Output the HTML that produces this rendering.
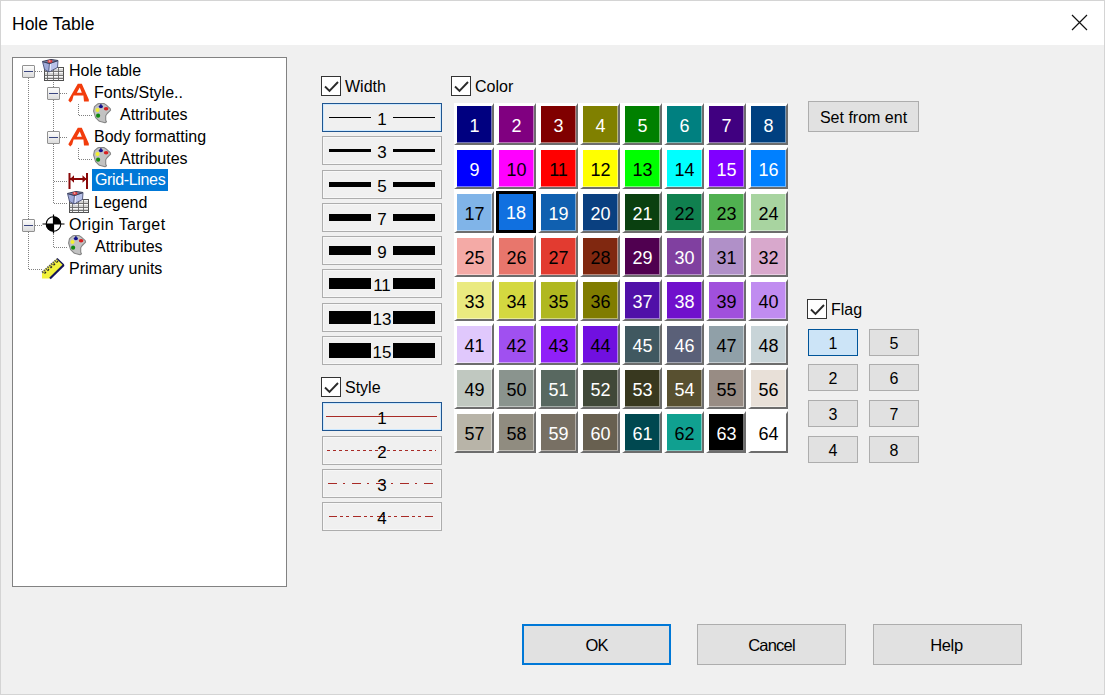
<!DOCTYPE html>
<html><head><meta charset="utf-8">
<style>
*{box-sizing:border-box}
html,body{margin:0;padding:0}
body{width:1105px;height:695px;position:relative;overflow:hidden;background:#f0f0f0;font-family:"Liberation Sans",sans-serif;color:#000}
.abs{position:absolute}
#frame{position:absolute;left:0;top:0;width:1105px;height:695px;border:1px solid #d4d4d4;pointer-events:none}
#title{position:absolute;left:1px;top:1px;width:1103px;height:44px;background:#fff}
#title span{position:absolute;left:11px;top:13px;font-size:17.5px;line-height:20px;white-space:nowrap}
#close{position:absolute;left:1070px;top:13px}
#tree{position:absolute;left:12px;top:57px;width:275px;height:530px;background:#fff;border:1px solid #828282}
.t{position:absolute;font-size:16px;line-height:20px;white-space:nowrap}
.selt{background:#0078d7;color:#fff;padding:0 3px}
.exp{position:absolute;width:13px;height:13px;border:1px solid #919191;border-radius:1px;background:linear-gradient(#fcfcfc,#dcdcdc)}
.exp:after{content:"";position:absolute;left:1px;top:5px;width:9px;height:1px;background:#3a4680}
.dv{position:absolute;width:1px;background-image:linear-gradient(#808080 50%,transparent 50%);background-size:1px 2px}
.dh{position:absolute;height:1px;background-image:linear-gradient(90deg,#808080 50%,transparent 50%);background-size:2px 1px}
.cb{position:absolute;width:20px;height:20px;border:1px solid #333;background:#fff}
.cb svg{position:absolute;left:0;top:0}
.lbl{position:absolute;font-size:16px;line-height:20px;white-space:nowrap}
#grid{position:absolute;left:454px;top:103px;width:334px;height:350px;background:#fff}
.cell{position:absolute;width:40px;height:42px;border-style:solid;border-width:3px 2px 2px 3px;border-color:#fff #6d6d6d #6d6d6d #fff;font-size:18px;line-height:40px;text-align:center;box-shadow:inset -1px -1px 0 rgba(255,255,255,.45)}
.cell.sel{border:3px solid #000;box-shadow:none;line-height:39px}
.wb{position:absolute;left:322px;width:120px;height:29px;background:#f0f0f0;border:1px solid #adadad;box-shadow:inset 0 0 0 1px #f7f7f7}
.wb.sel{border-color:#1f5590;box-shadow:inset 0 0 0 1px #cce8ff}
.wb i{position:absolute;width:42px;background:#000}
.wb span{position:absolute;left:0;width:118px;top:6px;text-align:center;font-size:17px;line-height:20px}
.st line{stroke:#a82a26;stroke-width:1}
.s2{stroke-dasharray:3 3}
.s3{stroke-dasharray:9 6 2 7}
.s4{stroke-dasharray:8 3 3 3 3 4}
.btn{position:absolute;background:#e1e1e1;border:1px solid #adadad;font-size:16px;line-height:20px;text-align:center}
.fb{position:absolute;width:50px;height:27px;background:#e1e1e1;border:1px solid #adadad;font-size:16px;line-height:27px;text-align:center}
.fb.sel{background:#cce4f7;border-color:#005499}
</style></head><body>
<div id="title"><span>Hole Table</span>
<svg id="close" width="18" height="18" viewBox="0 0 18 18"><path d="M1 1L16 16M16 1L1 16" stroke="#111" stroke-width="1.2" fill="none"/></svg>
</div>

<div id="tree"></div>
<!-- tree contents (page coords) -->
<div class="dv" style="left:28px;top:78px;height:192px"></div>
<div class="dh" style="left:35px;top:71px;width:7px"></div>
<div class="exp" style="left:22px;top:65px"></div>
<svg class="abs" style="left:42px;top:59px" width="23" height="23" viewBox="0 0 23 23">
 <defs><linearGradient id="bx" x1="0" y1="0" x2="1" y2="0"><stop offset="0" stop-color="#8e9ad0"/><stop offset=".45" stop-color="#c8d0f0"/><stop offset="1" stop-color="#98a4d8"/></linearGradient></defs>
 <rect x="2.5" y="8.5" width="19" height="13" fill="#d4d4d4" stroke="#505050"/>
 <path d="M3 9.5H21M3 13.5H21M3 17.5H21M3 20.5H21" stroke="#f8f8f8" stroke-width="1" fill="none"/>
 <path d="M2.5 12.5H21.5M2.5 16.5H21.5M2.5 19.5H21.5M5.5 8.5V21.5M11.5 8.5V21.5M16.5 8.5V21.5" stroke="#686868" stroke-width="0.9" fill="none"/>
 <path d="M0.5 2.5L7.5 4.5L7 13L2.5 10.5Z" fill="#9ea9d8" stroke="#4a5078" stroke-width="0.9"/><path d="M7.5 4.5L16 1.5L15.5 8.5L7 13Z" fill="#b9c2ea" stroke="#4a5078" stroke-width="0.9"/><path d="M8.5 5L8 12" stroke="#e6ebff" stroke-width="1.2"/>
 <path d="M0.5 2.5L7.5 4.5L16 1.5M0.5 2.5L9 0.5L16 1.5" stroke="#3a3f58" stroke-width="1.1" fill="#8088b0"/>
 <ellipse cx="8" cy="2.3" rx="2.6" ry="1.6" fill="#d83838"/><ellipse cx="7.6" cy="2" rx="1" ry=".6" fill="#fff"/>
</svg>
<div class="t" style="left:69px;top:61px">Hole table</div>

<!-- level1 vertical -->
<div class="dv" style="left:53px;top:82px;height:122px"></div>
<div class="dh" style="left:60px;top:93px;width:7px"></div>
<div class="exp" style="left:47px;top:87px"></div>
<svg class="abs A" style="left:68px;top:83px" width="22" height="20" viewBox="0 0 22 20"><path fill-rule="evenodd" fill="#f23c0c" d="M0.3 17.2L2.2 19.4L4.2 17.6L5.6 12.6H15.4L16 18.4H20.8V16.4L13.8 0.7H9.8Z M8.8 9.8H13.8L11.8 4.6Z"/></svg>
<div class="t" style="left:94px;top:83px">Fonts/Style..</div>
<div class="dv" style="left:78px;top:104px;height:11px"></div>
<div class="dh" style="left:79px;top:115px;width:13px"></div>
<svg class="abs pal" style="left:93px;top:103px" width="20" height="21" viewBox="0 0 20 21">
 <path d="M4.5 1.1L6.2 0.5H10.9L13.1 1.9L17.2 5.6L17.6 7.1L14.2 10.5L12.7 12.7V17.2L13.5 18.7L12 19.8L6.4 18.3L2.6 14.6L0.6 8.2L1.5 3.7Z" fill="#c2c2c2" stroke="#858585" stroke-width="1.1" stroke-linejoin="round"/>
 <ellipse cx="7.9" cy="3.6" rx="2.1" ry="1.6" fill="#10108a"/><path d="M7.9 1V3" stroke="#10108a" stroke-width="1.2"/><ellipse cx="13.1" cy="5.8" rx="2.3" ry="1.7" fill="#d82020"/><circle cx="4.5" cy="6.9" r="2" fill="#f2f030"/><circle cx="5.1" cy="12.7" r="2.1" fill="#108a10"/>
</svg>
<div class="t" style="left:120px;top:105px">Attributes</div>

<div class="dh" style="left:60px;top:137px;width:7px"></div>
<div class="exp" style="left:47px;top:131px"></div>
<svg class="abs A" style="left:68px;top:127px" width="22" height="20" viewBox="0 0 22 20"><path fill-rule="evenodd" fill="#f23c0c" d="M0.3 17.2L2.2 19.4L4.2 17.6L5.6 12.6H15.4L16 18.4H20.8V16.4L13.8 0.7H9.8Z M8.8 9.8H13.8L11.8 4.6Z"/></svg>
<div class="t" style="left:94px;top:127px">Body formatting</div>
<div class="dv" style="left:78px;top:148px;height:11px"></div>
<div class="dh" style="left:79px;top:159px;width:13px"></div>
<svg class="abs pal" style="left:93px;top:147px" width="20" height="21" viewBox="0 0 20 21">
 <path d="M4.5 1.1L6.2 0.5H10.9L13.1 1.9L17.2 5.6L17.6 7.1L14.2 10.5L12.7 12.7V17.2L13.5 18.7L12 19.8L6.4 18.3L2.6 14.6L0.6 8.2L1.5 3.7Z" fill="#c2c2c2" stroke="#858585" stroke-width="1.1" stroke-linejoin="round"/>
 <ellipse cx="7.9" cy="3.6" rx="2.1" ry="1.6" fill="#10108a"/><path d="M7.9 1V3" stroke="#10108a" stroke-width="1.2"/><ellipse cx="13.1" cy="5.8" rx="2.3" ry="1.7" fill="#d82020"/><circle cx="4.5" cy="6.9" r="2" fill="#f2f030"/><circle cx="5.1" cy="12.7" r="2.1" fill="#108a10"/>
</svg>
<div class="t" style="left:120px;top:149px">Attributes</div>

<div class="dh" style="left:54px;top:181px;width:13px"></div>
<svg class="abs" style="left:67px;top:172px" width="23" height="18" viewBox="0 0 23 18"><path d="M2.5 1V17M20 1V17M3 7H19.5" stroke="#8a0808" stroke-width="2" fill="none"/><path d="M3 7L7 3.2V10.8Z M19.5 7L15.5 3.2V10.8Z" fill="#8a0808"/></svg>
<div class="t selt" style="left:92px;top:169px;height:22px;line-height:22px;width:76px;letter-spacing:-0.35px">Grid-Lines</div>

<div class="dh" style="left:54px;top:203px;width:13px"></div>
<svg class="abs" style="left:67px;top:191px" width="23" height="23" viewBox="0 0 23 23">
 <defs><linearGradient id="bx2" x1="0" y1="0" x2="1" y2="0"><stop offset="0" stop-color="#8e9ad0"/><stop offset=".45" stop-color="#c8d0f0"/><stop offset="1" stop-color="#98a4d8"/></linearGradient></defs>
 <rect x="2.5" y="8.5" width="19" height="13" fill="#d4d4d4" stroke="#505050"/>
 <path d="M3 9.5H21M3 13.5H21M3 17.5H21M3 20.5H21" stroke="#f8f8f8" stroke-width="1" fill="none"/>
 <path d="M2.5 12.5H21.5M2.5 16.5H21.5M2.5 19.5H21.5M5.5 8.5V21.5M11.5 8.5V21.5M16.5 8.5V21.5" stroke="#686868" stroke-width="0.9" fill="none"/>
 <path d="M0.5 2.5L7.5 4.5L7 13L2.5 10.5Z" fill="#9ea9d8" stroke="#4a5078" stroke-width="0.9"/><path d="M7.5 4.5L16 1.5L15.5 8.5L7 13Z" fill="#b9c2ea" stroke="#4a5078" stroke-width="0.9"/><path d="M8.5 5L8 12" stroke="#e6ebff" stroke-width="1.2"/>
 <path d="M0.5 2.5L7.5 4.5L16 1.5M0.5 2.5L9 0.5L16 1.5" stroke="#3a3f58" stroke-width="1.1" fill="#8088b0"/>
 <ellipse cx="8" cy="2.3" rx="2.6" ry="1.6" fill="#d83838"/><ellipse cx="7.6" cy="2" rx="1" ry=".6" fill="#fff"/>
</svg>
<div class="t" style="left:94px;top:193px">Legend</div>

<div class="dh" style="left:35px;top:225px;width:7px"></div>
<div class="exp" style="left:22px;top:219px"></div>
<svg class="abs" style="left:42px;top:213px" width="23" height="22" viewBox="0 0 23 22">
 <circle cx="11.5" cy="11" r="7.3" fill="#fff" stroke="#000" stroke-width="1.1"/>
 <path d="M11.5 11V3.5A7.5 7.5 0 0 1 19 11Z M11.5 11V18.5A7.5 7.5 0 0 1 4 11Z" fill="#000"/>
 <path d="M0.5 11H22.5M11.5 1.5V20.5" stroke="#000" stroke-width="1.2"/>
</svg>
<div class="t" style="left:69px;top:215px;letter-spacing:0.4px">Origin Target</div>
<div class="dv" style="left:53px;top:234px;height:13px"></div>
<div class="dh" style="left:54px;top:247px;width:13px"></div>
<svg class="abs pal" style="left:68px;top:235px" width="20" height="21" viewBox="0 0 20 21">
 <path d="M4.5 1.1L6.2 0.5H10.9L13.1 1.9L17.2 5.6L17.6 7.1L14.2 10.5L12.7 12.7V17.2L13.5 18.7L12 19.8L6.4 18.3L2.6 14.6L0.6 8.2L1.5 3.7Z" fill="#c2c2c2" stroke="#858585" stroke-width="1.1" stroke-linejoin="round"/>
 <ellipse cx="7.9" cy="3.6" rx="2.1" ry="1.6" fill="#10108a"/><path d="M7.9 1V3" stroke="#10108a" stroke-width="1.2"/><ellipse cx="13.1" cy="5.8" rx="2.3" ry="1.7" fill="#d82020"/><circle cx="4.5" cy="6.9" r="2" fill="#f2f030"/><circle cx="5.1" cy="12.7" r="2.1" fill="#108a10"/>
</svg>
<div class="t" style="left:95px;top:237px">Attributes</div>

<div class="dh" style="left:29px;top:269px;width:13px"></div>
<svg class="abs" style="left:41px;top:257px" width="24" height="23" viewBox="0 0 24 23">
 <path d="M1 15L16 1.5L22.8 8L9 21.5H1Z" fill="#f2f23c"/>
 <path d="M22.8 8L9 21.5" stroke="#14145a" stroke-width="2.2"/>
 <path d="M16 1.5L22.8 8" stroke="#14145a" stroke-width="1.3"/>
 <path d="M1.2 15.6L16.2 2.2" stroke="#5a5a5a" stroke-width="2.2" stroke-dasharray="1.4 1"/>
 <path d="M3.5 16.5L5 15M6.5 13.8L8 12.3M9.5 11L11 9.5M12.5 8.3L14 6.8M15.5 5.6L17 4.1" stroke="#222" stroke-width="1.3"/>
</svg>
<div class="t" style="left:69px;top:259px">Primary units</div>

<!-- Width -->
<div class="cb" style="left:321px;top:76px"><svg width="18" height="18"><path d="M3 9.5L7.5 14L16 5" stroke="#2a2a2a" stroke-width="1.9" fill="none"/></svg></div>
<div class="lbl" style="left:345px;top:77px">Width</div>
<div class="wb sel" style="top:103px"><i style="left:6px;top:13px;height:1px"></i><i style="left:70px;top:13px;height:1px"></i><span>1</span></div>
<div class="wb" style="top:136px"><i style="left:6px;top:12px;height:3px"></i><i style="left:70px;top:12px;height:3px"></i><span>3</span></div>
<div class="wb" style="top:170px"><i style="left:6px;top:11px;height:5px"></i><i style="left:70px;top:11px;height:5px"></i><span>5</span></div>
<div class="wb" style="top:203px"><i style="left:6px;top:10px;height:7px"></i><i style="left:70px;top:10px;height:7px"></i><span>7</span></div>
<div class="wb" style="top:236px"><i style="left:6px;top:9px;height:9px"></i><i style="left:70px;top:9px;height:9px"></i><span>9</span></div>
<div class="wb" style="top:269px"><i style="left:6px;top:8px;height:11px"></i><i style="left:70px;top:8px;height:11px"></i><span>11</span></div>
<div class="wb" style="top:303px"><i style="left:6px;top:7px;height:13px"></i><i style="left:70px;top:7px;height:13px"></i><span>13</span></div>
<div class="wb" style="top:336px"><i style="left:6px;top:6px;height:15px"></i><i style="left:70px;top:6px;height:15px"></i><span>15</span></div>

<div class="cb" style="left:321px;top:377px"><svg width="18" height="18"><path d="M3 9.5L7.5 14L16 5" stroke="#2a2a2a" stroke-width="1.9" fill="none"/></svg></div>
<div class="lbl" style="left:345px;top:378px">Style</div>
<div class="wb sel st" style="top:402px"><svg width="120" height="29" style="position:absolute;left:-1px;top:-1px"><line x1="4" y1="14.5" x2="115" y2="14.5" class="s1"/></svg><span>1</span></div>
<div class="wb st" style="top:436px"><svg width="120" height="29" style="position:absolute;left:-1px;top:-1px"><line x1="5" y1="14.5" x2="114" y2="14.5" class="s2"/></svg><span>2</span></div>
<div class="wb st" style="top:469px"><svg width="120" height="29" style="position:absolute;left:-1px;top:-1px"><line x1="6" y1="14.5" x2="111" y2="14.5" class="s3"/></svg><span>3</span></div>
<div class="wb st" style="top:502px"><svg width="120" height="29" style="position:absolute;left:-1px;top:-1px"><line x1="7" y1="14.5" x2="112" y2="14.5" class="s4"/></svg><span>4</span></div>

<!-- Color -->
<div class="cb" style="left:451px;top:76px"><svg width="18" height="18"><path d="M3 9.5L7.5 14L16 5" stroke="#2a2a2a" stroke-width="1.9" fill="none"/></svg></div>
<div class="lbl" style="left:475px;top:77px">Color</div>
<div id="grid"></div>
<div class="cell" style="left:454px;top:103px;background:#000080;color:#fff">1</div>
<div class="cell" style="left:496px;top:103px;background:#800080;color:#fff">2</div>
<div class="cell" style="left:538px;top:103px;background:#800000;color:#fff">3</div>
<div class="cell" style="left:580px;top:103px;background:#808000;color:#fff">4</div>
<div class="cell" style="left:622px;top:103px;background:#008000;color:#fff">5</div>
<div class="cell" style="left:664px;top:103px;background:#008080;color:#fff">6</div>
<div class="cell" style="left:706px;top:103px;background:#400080;color:#fff">7</div>
<div class="cell" style="left:748px;top:103px;background:#004080;color:#fff">8</div>
<div class="cell" style="left:454px;top:147px;background:#0000ff;color:#fff">9</div>
<div class="cell" style="left:496px;top:147px;background:#ff00ff;color:#000">10</div>
<div class="cell" style="left:538px;top:147px;background:#ff0000;color:#000">11</div>
<div class="cell" style="left:580px;top:147px;background:#ffff00;color:#000">12</div>
<div class="cell" style="left:622px;top:147px;background:#00ff00;color:#000">13</div>
<div class="cell" style="left:664px;top:147px;background:#00ffff;color:#000">14</div>
<div class="cell" style="left:706px;top:147px;background:#8000ff;color:#fff">15</div>
<div class="cell" style="left:748px;top:147px;background:#0080ff;color:#fff">16</div>
<div class="cell" style="left:454px;top:191px;background:#80b4e8;color:#000">17</div>
<div class="cell sel" style="left:496px;top:191px;background:#1070e0;color:#fff">18</div>
<div class="cell" style="left:538px;top:191px;background:#1060b0;color:#fff">19</div>
<div class="cell" style="left:580px;top:191px;background:#0a4080;color:#fff">20</div>
<div class="cell" style="left:622px;top:191px;background:#0a4010;color:#fff">21</div>
<div class="cell" style="left:664px;top:191px;background:#10804f;color:#000">22</div>
<div class="cell" style="left:706px;top:191px;background:#50b050;color:#000">23</div>
<div class="cell" style="left:748px;top:191px;background:#a8d4a0;color:#000">24</div>
<div class="cell" style="left:454px;top:235px;background:#f4aaa6;color:#000">25</div>
<div class="cell" style="left:496px;top:235px;background:#e8766c;color:#000">26</div>
<div class="cell" style="left:538px;top:235px;background:#e23b30;color:#000">27</div>
<div class="cell" style="left:580px;top:235px;background:#802810;color:#000">28</div>
<div class="cell" style="left:622px;top:235px;background:#500050;color:#fff">29</div>
<div class="cell" style="left:664px;top:235px;background:#8040a0;color:#fff">30</div>
<div class="cell" style="left:706px;top:235px;background:#b090c8;color:#000">31</div>
<div class="cell" style="left:748px;top:235px;background:#d8a8cc;color:#000">32</div>
<div class="cell" style="left:454px;top:279px;background:#eaea80;color:#000">33</div>
<div class="cell" style="left:496px;top:279px;background:#d4d840;color:#000">34</div>
<div class="cell" style="left:538px;top:279px;background:#b0b820;color:#000">35</div>
<div class="cell" style="left:580px;top:279px;background:#807c00;color:#000">36</div>
<div class="cell" style="left:622px;top:279px;background:#5010a8;color:#fff">37</div>
<div class="cell" style="left:664px;top:279px;background:#7010cc;color:#fff">38</div>
<div class="cell" style="left:706px;top:279px;background:#a050dc;color:#000">39</div>
<div class="cell" style="left:748px;top:279px;background:#c08cf0;color:#000">40</div>
<div class="cell" style="left:454px;top:323px;background:#e0c8fc;color:#000">41</div>
<div class="cell" style="left:496px;top:323px;background:#a050f0;color:#000">42</div>
<div class="cell" style="left:538px;top:323px;background:#9020f8;color:#000">43</div>
<div class="cell" style="left:580px;top:323px;background:#7010e0;color:#000">44</div>
<div class="cell" style="left:622px;top:323px;background:#405860;color:#fff">45</div>
<div class="cell" style="left:664px;top:323px;background:#5a6078;color:#fff">46</div>
<div class="cell" style="left:706px;top:323px;background:#90a0a8;color:#000">47</div>
<div class="cell" style="left:748px;top:323px;background:#c8d4d8;color:#000">48</div>
<div class="cell" style="left:454px;top:367px;background:#c0c8c0;color:#000">49</div>
<div class="cell" style="left:496px;top:367px;background:#8a948e;color:#000">50</div>
<div class="cell" style="left:538px;top:367px;background:#586860;color:#fff">51</div>
<div class="cell" style="left:580px;top:367px;background:#404838;color:#fff">52</div>
<div class="cell" style="left:622px;top:367px;background:#38381f;color:#fff">53</div>
<div class="cell" style="left:664px;top:367px;background:#585030;color:#fff">54</div>
<div class="cell" style="left:706px;top:367px;background:#988c84;color:#000">55</div>
<div class="cell" style="left:748px;top:367px;background:#e8e0d8;color:#000">56</div>
<div class="cell" style="left:454px;top:411px;background:#b8b4a8;color:#000">57</div>
<div class="cell" style="left:496px;top:411px;background:#908c80;color:#000">58</div>
<div class="cell" style="left:538px;top:411px;background:#787064;color:#fff">59</div>
<div class="cell" style="left:580px;top:411px;background:#686050;color:#fff">60</div>
<div class="cell" style="left:622px;top:411px;background:#004850;color:#fff">61</div>
<div class="cell" style="left:664px;top:411px;background:#10a090;color:#000">62</div>
<div class="cell" style="left:706px;top:411px;background:#000000;color:#fff">63</div>
<div class="cell" style="left:748px;top:411px;background:#ffffff;color:#000">64</div>

<div class="btn" style="left:808px;top:101px;width:111px;height:31px;line-height:31px">Set from ent</div>

<div class="cb" style="left:807px;top:299px"><svg width="18" height="18"><path d="M3 9.5L7.5 14L16 5" stroke="#2a2a2a" stroke-width="1.9" fill="none"/></svg></div>
<div class="lbl" style="left:831px;top:300px">Flag</div>
<div class="fb sel" style="left:808px;top:329px">1</div>
<div class="fb" style="left:808px;top:364px">2</div>
<div class="fb" style="left:808px;top:400px">3</div>
<div class="fb" style="left:808px;top:436px">4</div>
<div class="fb" style="left:869px;top:329px">5</div>
<div class="fb" style="left:869px;top:364px">6</div>
<div class="fb" style="left:869px;top:400px">7</div>
<div class="fb" style="left:869px;top:436px">8</div>

<div class="btn" style="left:522px;top:624px;width:149px;height:41px;line-height:39px;border:2px solid #0078d7;line-height:38px;font-size:16.5px;letter-spacing:-1px">OK</div>
<div class="btn" style="left:697px;top:624px;width:149px;height:41px;line-height:40px;font-size:16.5px;letter-spacing:-0.8px">Cancel</div>
<div class="btn" style="left:873px;top:624px;width:149px;height:41px;line-height:40px;font-size:16.5px;letter-spacing:-0.4px;text-indent:-2px">Help</div>

<div id="frame"></div>
</body></html>
